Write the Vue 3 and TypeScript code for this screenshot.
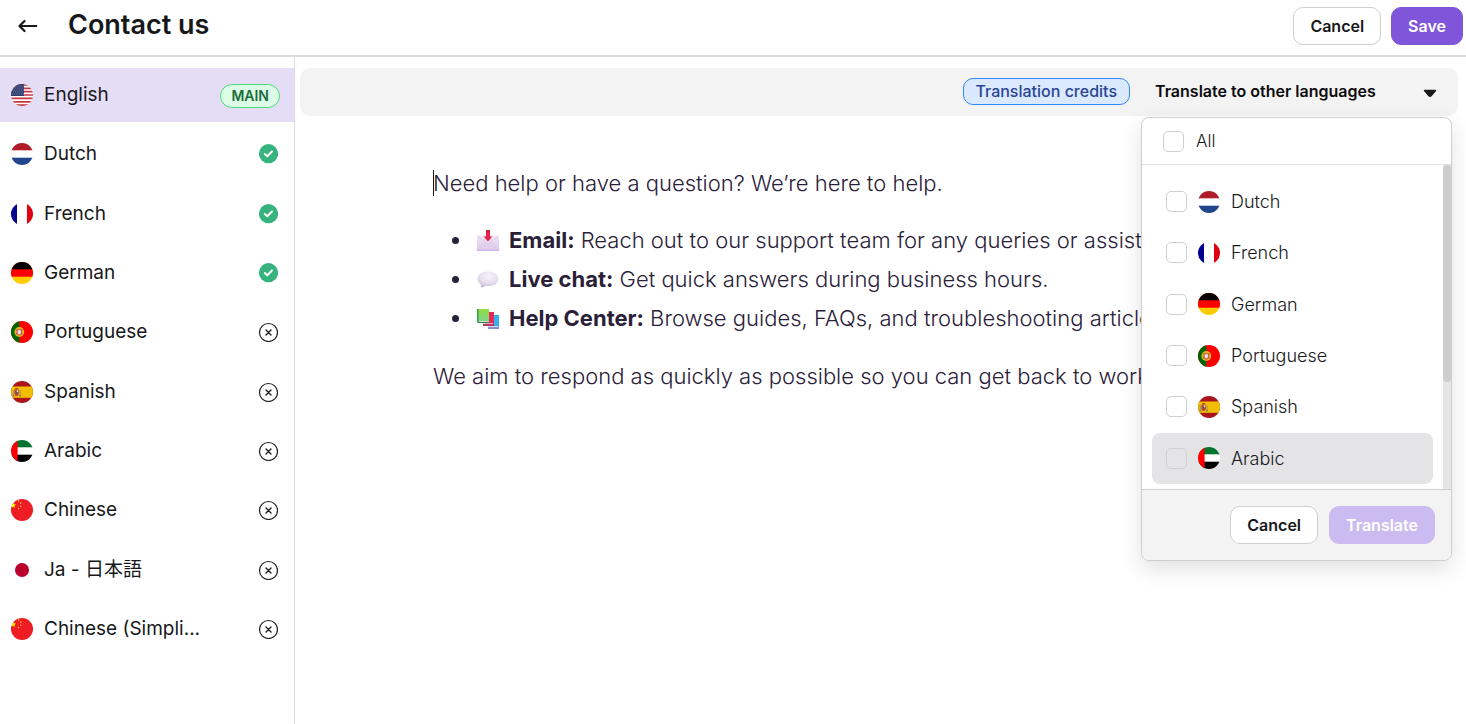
<script setup lang="ts">
import { ref } from 'vue'

interface Language {
  name: string
  flag: string
  status: 'main' | 'done' | 'missing'
}

const languages: Language[] = [
  { name: 'English', flag: 'us', status: 'main' },
  { name: 'Dutch', flag: 'nl', status: 'done' },
  { name: 'French', flag: 'fr', status: 'done' },
  { name: 'German', flag: 'de', status: 'done' },
  { name: 'Portuguese', flag: 'pt', status: 'missing' },
  { name: 'Spanish', flag: 'es', status: 'missing' },
  { name: 'Arabic', flag: 'ae', status: 'missing' },
  { name: 'Chinese', flag: 'cn', status: 'missing' },
  { name: 'Ja - 日本語', flag: 'jp', status: 'missing' },
  { name: 'Chinese (Simpli...', flag: 'cn', status: 'missing' },
]

const targets = languages.slice(1, 7)
const current = ref('English')
const hovered = ref('Arabic')
const picked = ref<string[]>([])
const all = ref(false)
const open = ref(true)

function toggleAll() {
  picked.value = all.value ? targets.map((t) => t.name) : []
}
</script>

<template>
  <div class="page">
    <svg class="defs" aria-hidden="true">
      <defs>
        <symbol id="flag-us" viewBox="0 0 22 22">
          <rect width="22" height="22" fill="#fff" />
          <path d="M0 .9h22M0 4.3h22M0 7.7h22M0 11h22M0 14.4h22M0 17.8h22M0 21.1h22" stroke="#c8373f" stroke-width="1.7" />
          <rect width="13" height="12" fill="#2f3c6e" />
          <path d="M1 2h12M2 4h11M1 6h12M2 8h11M1 10h12" stroke="#8b93b5" stroke-width=".9" stroke-dasharray="1 1.2" />
        </symbol>
        <symbol id="flag-nl" viewBox="0 0 22 22">
          <rect width="22" height="22" fill="#fff" />
          <rect width="22" height="7.3" fill="#ae1c28" />
          <rect y="14.7" width="22" height="7.3" fill="#21468b" />
        </symbol>
        <symbol id="flag-fr" viewBox="0 0 22 22">
          <rect width="22" height="22" fill="#fff" />
          <rect width="6" height="22" fill="#000091" />
          <rect x="16" width="6" height="22" fill="#e1000f" />
        </symbol>
        <symbol id="flag-de" viewBox="0 0 22 22">
          <rect width="22" height="22" fill="#fc0" />
          <rect width="22" height="14.7" fill="#f00" />
          <rect width="22" height="7.3" fill="#000" />
        </symbol>
        <symbol id="flag-pt" viewBox="0 0 22 22">
          <rect width="22" height="22" fill="#f00" />
          <rect width="8.3" height="22" fill="#060" />
          <circle cx="8.3" cy="11" r="4.9" fill="#d8b81c" />
          <path d="M4.5 8.5l7.6 5M4.5 13.5l7.6-5" stroke="#8c7a15" stroke-width=".7" />
          <path d="M5.6 8.2h5.4v3.6a2.7 2.7 0 0 1-5.4 0z" fill="#e04a4a" />
          <path d="M6.7 9.3h3.2v2.5a1.6 1.6 0 0 1-3.2 0z" fill="#dfe6f5" />
        </symbol>
        <symbol id="flag-es" viewBox="0 0 22 22">
          <rect width="22" height="22" fill="#aa151b" />
          <rect y="5.5" width="22" height="11.3" fill="#f1bf00" />
          <path d="M3.4 8.6h4.4v4.2a2.2 2.2 0 0 1-4.4 0z" fill="#b5473b" />
          <path d="M5.7 9.2h1.6v2H5.7z" fill="#e6c9c0" />
          <path d="M3.9 8.2c0-1.6 3.4-1.6 3.4 0z" fill="#a8432f" />
          <path d="M2.2 9.2v5.6M9 9.2v5.6" stroke="#9a8a68" stroke-width="1" />
          <path d="M1.4 14.8h2M8 14.8h2" stroke="#6a6a78" stroke-width=".9" />
          <circle cx="5.6" cy="11.8" r=".8" fill="#3d4f8c" />
        </symbol>
        <symbol id="flag-ae" viewBox="0 0 22 22">
          <rect width="22" height="22" fill="#fff" />
          <rect width="22" height="7.3" fill="#00732f" />
          <rect y="14.7" width="22" height="7.3" fill="#000" />
          <rect width="6.6" height="22" fill="#f00" />
        </symbol>
        <symbol id="flag-cn" viewBox="0 0 22 22">
          <rect width="22" height="22" fill="#ee1c25" />
          <path d="M2.2 3.3l.8 2 2.1.1-1.6 1.3.5 2.1-1.8-1.1-1.8 1.1.5-2.1L-.7 5.4l2.1-.1z" fill="#ff0" />
          <g fill="#f6c010">
            <circle cx="7.6" cy="1.9" r=".8" />
            <circle cx="9.8" cy="4.1" r=".8" />
            <circle cx="9.8" cy="7.2" r=".8" />
            <circle cx="7.6" cy="9.6" r=".8" />
          </g>
        </symbol>
        <symbol id="flag-jp" viewBox="0 0 22 22">
          <rect width="22" height="22" fill="#fff" />
          <circle cx="11" cy="11" r="7" fill="#bc002d" />
        </symbol>
      </defs>
    </svg>

    <header class="header">
      <button class="back" type="button" aria-label="Back">
        <svg width="20" height="14" viewBox="0 0 20 14" fill="none" stroke="#17181a" stroke-width="2.2" stroke-linecap="round" stroke-linejoin="round">
          <path d="M18.3 7H2M6.5 2 1.5 7l5 5" />
        </svg>
      </button>
      <h1 class="title">Contact us</h1>
      <button class="btn" type="button">Cancel</button>
      <button class="btn primary" type="button">Save</button>
    </header>

    <div class="body">
      <nav class="sidebar" aria-label="Languages">
        <button
          v-for="lang in languages"
          :key="lang.name"
          type="button"
          class="lang"
          :class="{ active: lang.name === current }"
          @click="current = lang.name"
        >
          <svg class="flag" aria-hidden="true"><use :href="`#flag-${lang.flag}`" /></svg>
          <span class="lang-name">{{ lang.name }}</span>
          <span v-if="lang.status === 'main'" class="main-badge">MAIN</span>
          <svg v-else-if="lang.status === 'done'" class="status" viewBox="0 0 20 20" fill="none">
            <circle cx="10.5" cy="9.7" r="9.6" fill="#36b37e" />
            <path d="M6.8 10 9.3 12.2 14 7.5" stroke="#fff" stroke-width="2" stroke-linecap="round" stroke-linejoin="round" />
          </svg>
          <svg v-else class="status" viewBox="0 0 20 20" fill="none" stroke="#1d1e20" stroke-linecap="round">
            <circle cx="10.5" cy="10.5" r="9" stroke-width="1.2" />
            <path d="M8 8l5 5M13 8l-5 5" stroke-width="1.4" />
          </svg>
        </button>
      </nav>

      <main class="main">
        <div class="toolbar">
          <span class="credits">Translation credits</span>
          <button class="translate-toggle" type="button" :aria-expanded="open" @click="open = !open">
            <span>Translate to other languages</span>
            <svg class="caret" width="14" height="9" viewBox="0 0 14 9">
              <path d="M1.6 1.6h10.8L8 6.7q-1 .9-2 0z" fill="#17181a" stroke="#17181a" stroke-width="1.6" stroke-linejoin="round" />
            </svg>
          </button>

          <section v-if="open" class="menu">
            <label class="menu-all">
              <input v-model="all" type="checkbox" class="box" @change="toggleAll" />
              <span>All</span>
            </label>
            <div class="menu-scroll">
              <div class="menu-list">
                <label
                  v-for="lang in targets"
                  :key="lang.name"
                  class="option"
                  :class="{ hovered: lang.name === hovered }"
                  @mouseenter="hovered = lang.name"
                >
                  <input v-model="picked" type="checkbox" class="box" :value="lang.name" />
                  <svg class="flag" aria-hidden="true"><use :href="`#flag-${lang.flag}`" /></svg>
                  <span>{{ lang.name }}</span>
                </label>
              </div>
              <div class="track"><div class="thumb"></div></div>
            </div>
            <footer class="menu-footer">
              <button class="btn" type="button" @click="open = false">Cancel</button>
              <button class="btn primary" type="button" :disabled="picked.length === 0">Translate</button>
            </footer>
          </section>
        </div>

        <article class="editor">
          <p><span class="cursor"></span>Need help or have a question? We’re here to help.</p>
          <ul>
            <li>
              <svg class="emoji" viewBox="0 0 22 22">
                <defs>
                  <linearGradient id="env" x1="0" y1="0" x2="0" y2="1">
                    <stop offset="0" stop-color="#f0e6f3" />
                    <stop offset="1" stop-color="#dfc9ee" />
                  </linearGradient>
                </defs>
                <rect y="5.5" width="22" height="15" rx="1" fill="url(#env)" />
                <path d="M.5 20 8.500 13M21.500 20l-8-7M.5 6 11 15l10.500-9" fill="none" stroke="#d3c1e2" stroke-width=".7" />
                <path d="M0 20.300h22" stroke="#c9a3ec" stroke-width="1" />
                <path d="M9 0h4v6.500h2.400L11 11.500 6.600 6.500H9z" fill="#e3244f" />
                <path d="M9 0h4v1.200H9z" fill="#b8263f" />
              </svg>
              <span><strong>Email:</strong> Reach out to our support team for any queries or assistance.</span>
            </li>
            <li>
              <svg class="emoji" viewBox="0 0 22 22">
                <defs>
                  <radialGradient id="bub" cx=".55" cy=".3" r=".75">
                    <stop offset="0" stop-color="#f7f3f9" />
                    <stop offset=".6" stop-color="#e6deee" />
                    <stop offset="1" stop-color="#bfb0d8" />
                  </radialGradient>
                </defs>
                <path d="M11 2.500C5 2.500 .6 5.700 .6 9.800c0 2.300 1.500 4.300 3.600 5.600.2 1.100-.1 2.100-.7 2.900 2 .1 3.600-.4 4.800-1.500.9.200 1.800.3 2.700.3 6 0 10.400-3.200 10.400-7.300S17 2.500 11 2.500z" fill="url(#bub)" />
              </svg>
              <span><strong>Live chat:</strong> Get quick answers during business hours.</span>
            </li>
            <li>
              <svg class="emoji" viewBox="0 0 22 22">
                <defs>
                  <linearGradient id="book" x1="0" y1="0" x2="0" y2="1">
                    <stop offset="0" stop-color="#8fdc3c" />
                    <stop offset="1" stop-color="#7fd592" />
                  </linearGradient>
                </defs>
                <rect x="13" y="7" width="9" height="13" fill="#35b0ee" />
                <path d="M11 19h11v2H11z" fill="#7f86d8" />
                <path d="M11 18.600h10" stroke="#e9e4f4" stroke-width="1" />
                <rect x="8" y="4" width="9" height="13" fill="#e22a58" />
                <path d="M6 15.500h11V18H6z" fill="#b3305f" />
                <path d="M6 15.600h10" stroke="#efd6df" stroke-width=".8" />
                <rect x="0" y="1" width="12" height="12.500" fill="url(#book)" />
                <path d="M0 1h1.500v13.500H0z" fill="#3f9a55" />
                <path d="M1 13.500h11V15H1z" fill="#37804a" />
                <path d="M2 13.500h10" stroke="#e3efdc" stroke-width=".8" />
              </svg>
              <span><strong>Help Center:</strong> Browse guides, FAQs, and troubleshooting articles.</span>
            </li>
          </ul>
          <p>We aim to respond as quickly as possible so you can get back to work.</p>
        </article>
      </main>
    </div>
  </div>
</template>

<style>
body {
  background: #fff;
}
</style>

<style scoped>
.page {
  display: flex;
  flex-direction: column;
  min-height: 100vh;
  overflow: hidden;
  color: #17181a;
  font-family: Inter, 'Noto Sans CJK JP', sans-serif;
  font-size: 16px;
}
.page *,
.page *::before {
  box-sizing: border-box;
}
button {
  font-family: inherit;
  color: inherit;
  cursor: pointer;
}
.defs {
  position: absolute;
  width: 0;
  height: 0;
}
.header {
  display: flex;
  align-items: center;
  gap: 10px;
  padding: 7px 3px 10px 18px;
  border-bottom: 2px solid #dcdcde;
}
.back {
  display: flex;
  padding: 0;
  border: 0;
  background: none;
}
.title {
  flex: 1;
  margin: 0 0 3px 20px;
  font-size: 27px;
  line-height: 34px;
  font-weight: 600;
}
.btn {
  height: 38px;
  padding: 0 16px;
  border: 1px solid #cfcfd2;
  border-radius: 10px;
  background: #fff;
  font-size: 16px;
  font-weight: 600;
}
.btn.primary {
  border-color: #7f56d9;
  background: #7f56d9;
  color: #fff;
}
.btn.primary:disabled {
  border-color: #ccbbf1;
  background: #ccbbf1;
}
.body {
  display: flex;
  flex: 1;
}
.sidebar {
  display: flex;
  flex-direction: column;
  justify-content: space-between;
  width: 295px;
  flex: none;
  padding: 11px 0 68px;
  border-right: 1px solid #dcdcde;
}
.lang {
  display: flex;
  align-items: center;
  height: 54px;
  padding: 0 14px 0 11px;
  border: 0;
  background: none;
  font-size: 19px;
  text-align: left;
}
.lang.active {
  background: #e5dcf6;
}
.flag {
  flex: none;
  width: 22px;
  height: 22px;
  border-radius: 50%;
}
.lang-name {
  margin-left: 11px;
  white-space: nowrap;
  line-height: 26px;
}
.status {
  width: 20px;
  height: 20px;
  margin: 0 2px 0 auto;
}
.main-badge {
  margin: 2px 0 0 auto;
  padding: 0 10px;
  border: 1px solid #4ade80;
  border-radius: 12px;
  background: #dcfce7;
  color: #1c6b3c;
  font-size: 14px;
  line-height: 22px;
  font-weight: 600;
}
.main {
  flex: 1;
  min-width: 0;
  padding: 11px 8px 0 5px;
}
.toolbar {
  position: relative;
  display: flex;
  align-items: center;
  justify-content: flex-end;
  gap: 25px;
  height: 48px;
  padding: 0 21px 2px 0;
  border-radius: 10px;
  background: #f3f3f3;
}
.credits {
  padding: 0 12px;
  border: 1px solid #2f88f5;
  border-radius: 10px;
  background: #dbe9fe;
  color: #2a4494;
  font-size: 16px;
  line-height: 25px;
  font-weight: 500;
}
.translate-toggle {
  display: flex;
  align-items: center;
  justify-content: space-between;
  width: 282px;
  padding: 0;
  border: 0;
  background: none;
  color: #0b0b0c;
  font-size: 16px;
  font-weight: 600;
}
.caret {
  margin-top: 4px;
}
.menu {
  position: absolute;
  z-index: 2;
  top: 49px;
  right: 6px;
  width: 311px;
  overflow: hidden;
  border: 1px solid #cfcfd2;
  border-radius: 8px;
  background: #fff;
  box-shadow: 0 8px 22px rgba(0, 0, 0, 0.12);
}
.menu-all {
  display: flex;
  align-items: center;
  gap: 12px;
  height: 47px;
  padding-left: 21px;
  border-bottom: 1px solid #e2e2e4;
  font-size: 17px;
  font-weight: 350;
}
.box {
  appearance: none;
  flex: none;
  width: 21px;
  height: 21px;
  margin: 0;
  border: 1px solid #cfcfd2;
  border-radius: 5px;
}
.box:checked {
  background: #7f56d9;
}
.menu-scroll {
  display: flex;
}
.menu-list {
  flex: 1;
  display: grid;
  grid-auto-rows: 1fr;
  height: 324px;
  padding: 11px 10px 5px;
}
.option {
  display: flex;
  align-items: center;
  gap: 11px;
  padding-left: 14px;
  border-radius: 8px;
  font-size: 18px;
  font-weight: 350;
}
.option.hovered {
  background: #e4e4e6;
}
.option.hovered .box {
  border-color: #d0d0d2;
}
.track {
  width: 8px;
  background: #e6e6e6;
}
.thumb {
  height: 67%;
  border-radius: 4px;
  background: #cdcdcd;
}
.menu-footer {
  display: flex;
  justify-content: flex-end;
  gap: 11px;
  padding: 16px;
  border-top: 1px solid #cfcfd2;
  background: #f3f3f3;
}
.editor {
  padding: 48px 0 0 133px;
  color: #2a2139;
  font-size: 22px;
  font-weight: 350;
  line-height: 39px;
  white-space: nowrap;
}
.editor p {
  position: relative;
  margin: 0;
}
.cursor {
  position: absolute;
  top: 6px;
  left: 0;
  width: 1px;
  height: 26px;
  background: #17181a;
}
.editor ul {
  margin: 18px 0 19px;
  padding: 0;
  list-style: none;
}
.editor li {
  display: flex;
  align-items: center;
  padding-left: 19px;
}
.editor li::before {
  content: '';
  width: 7px;
  height: 7px;
  border-radius: 50%;
  background: currentColor;
}
.editor strong {
  font-weight: 700;
}
.emoji {
  flex: none;
  width: 22px;
  height: 22px;
  margin: 0 10px 0 18px;
}
</style>
